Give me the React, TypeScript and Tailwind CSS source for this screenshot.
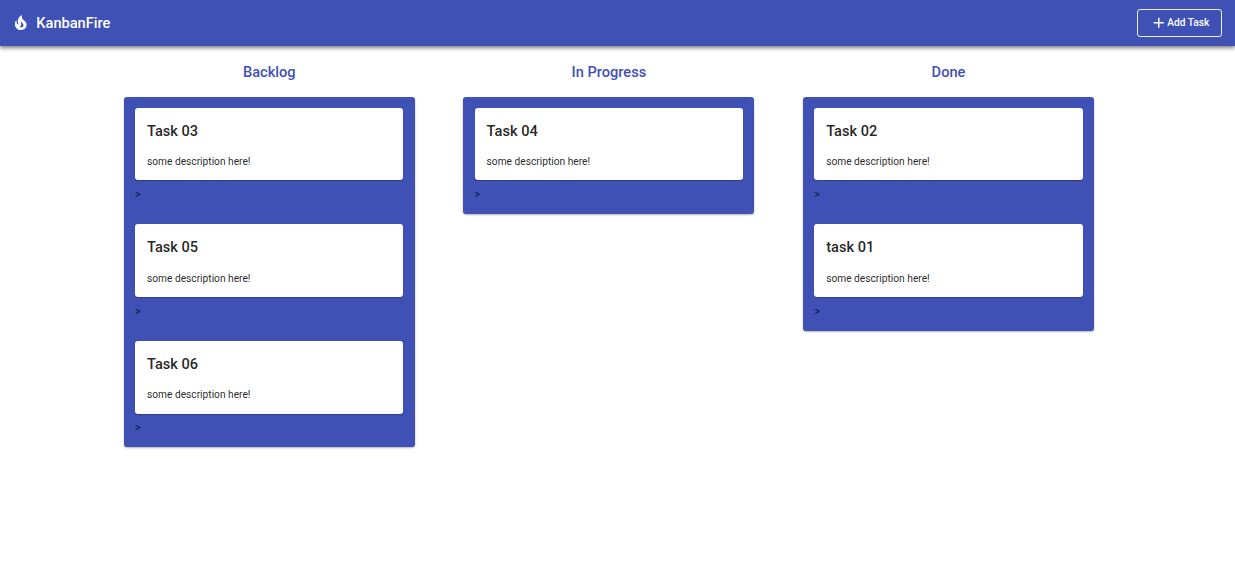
import React from 'react';
import { MdAdd } from 'react-icons/md';

type Task = { title: string; description: string };

const columns: { name: string; tasks: Task[] }[] = [
  {
    name: 'Backlog',
    tasks: [
      { title: 'Task 03', description: 'some description here!' },
      { title: 'Task 05', description: 'some description here!' },
      { title: 'Task 06', description: 'some description here!' },
    ],
  },
  { name: 'In Progress', tasks: [{ title: 'Task 04', description: 'some description here!' }] },
  {
    name: 'Done',
    tasks: [
      { title: 'Task 02', description: 'some description here!' },
      { title: 'task 01', description: 'some description here!' },
    ],
  },
];

function FlameIcon() {
  return (
    <svg viewBox="0 0 24 24" fill="currentColor" className="size-[17.5px]" aria-hidden="true">
      <path d="M19.48 12.35c-1.57-4.08-7.16-4.3-5.81-10.23.1-.44-.37-.78-.75-.55C9.29 3.71 6.68 8 8.87 13.62c.18.46-.36.89-.75.59-1.81-1.37-2-3.34-1.84-4.75.06-.52-.62-.77-.91-.34C4.69 10.16 4 11.84 4 14.37c.38 5.6 5.11 7.32 6.81 7.54 2.43.31 5.06-.14 6.95-1.87 2.08-1.93 2.84-5.01 1.72-7.69zm-9.28 5.03c1.44-.35 2.18-1.39 2.38-2.31.33-1.43-.96-2.83-.09-5.09.33 1.87 3.27 3.04 3.27 5.08.08 2.53-2.66 4.7-5.56 2.32z" />
    </svg>
  );
}

function TaskCard({ task }: { task: Task }) {
  return (
    <div>
      <div className="h-[72.7px] rounded-[3px] bg-white pl-[11.8px] pt-3 shadow-[0_1px_1px_rgba(0,0,0,0.25)]">
        <h2 className="text-[14.6px] leading-[23px] font-medium text-black/87">{task.title}</h2>
        <p className="mt-[11.4px] text-[10.2px] leading-4 text-black/87">{task.description}</p>
      </div>
      <div className="h-[22px] pt-[6.6px] text-[10px] leading-4 text-black/87">&gt;</div>
    </div>
  );
}

export default function App() {
  return (
    <div className="min-h-[575px] bg-white font-['Roboto',sans-serif]">
      <header className="relative flex h-[46.4px] items-center bg-[#3f51b5] pl-3 pr-[13px] text-white shadow-[0_2px_4px_rgba(0,0,0,0.5)]">
        <FlameIcon />
        <span className="ml-[6.8px] pt-px text-[14.6px] font-medium">KanbanFire</span>
        <button className="ml-auto flex h-7 w-[85px] items-center justify-center rounded-[3px] border border-white/90 text-[10.2px] font-medium">
          <MdAdd className="size-[17.5px]" />
          <span className="-mt-px">Add Task</span>
        </button>
      </header>
      <main className="flex gap-[48.6px] pl-[123.8px] pt-[14px]">
        {columns.map((column) => (
          <section key={column.name} className="w-[291px]">
            <h2 className="text-center text-[14.6px] leading-6 font-medium text-[#3f51b5]">{column.name}</h2>
            <div className="mt-[12.2px] flex flex-col gap-[22px] rounded-[3px] bg-[#3f51b5] px-[11.4px] pt-[11px] pb-[11.8px] shadow-[0_1px_2px_rgba(0,0,0,0.3)]">
              {column.tasks.map((task) => (
                <TaskCard key={task.title} task={task} />
              ))}
            </div>
          </section>
        ))}
      </main>
    </div>
  );
}
